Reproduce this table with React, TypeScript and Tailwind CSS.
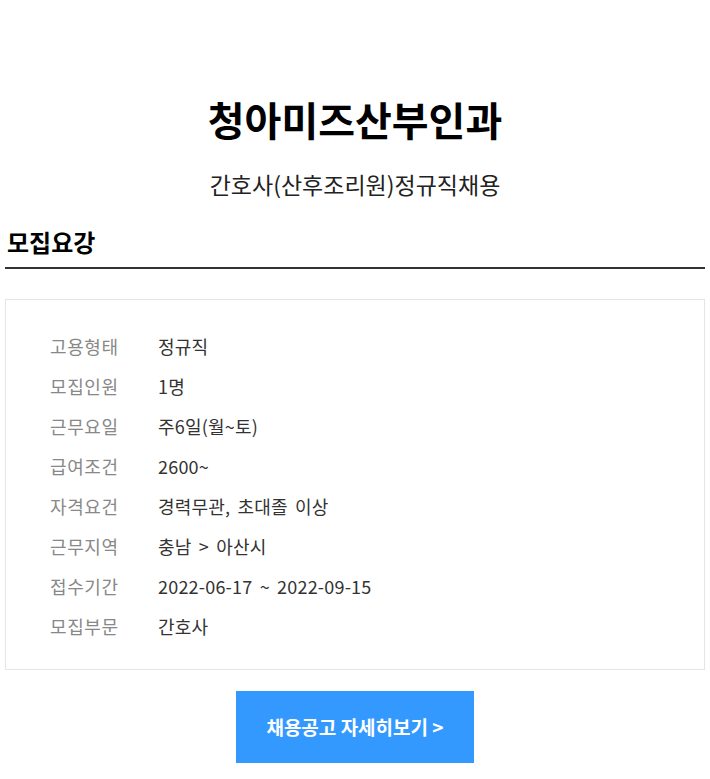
import React from "react";

const rows: [string, string][] = [
  ["고용형태", "정규직"],
  ["모집인원", "1명"],
  ["근무요일", "주6일(월~토)"],
  ["급여조건", "2600~"],
  ["자격요건", "경력무관, 초대졸 이상"],
  ["근무지역", "충남 > 아산시"],
  ["접수기간", "2022-06-17 ~ 2022-09-15"],
  ["모집부문", "간호사"],
];

export default function App() {
  return (
    <div
      className="w-[710px] bg-white px-[5px] text-[#222]"
      style={{ fontFamily: '"Noto Sans CJK KR", "Noto Sans", sans-serif' }}
    >
      <h1 className="pt-[92px] text-center text-[40px] font-bold leading-[54px] text-black">
        청아미즈산부인과
      </h1>
      <p className="mt-[23px] text-center text-[23px] leading-[30px] text-[#222]">
        간호사(산후조리원)정규직채용
      </p>
      <h2 className="mt-[27px] pl-[2px] text-[24px] font-bold leading-[32px] text-black">
        모집요강
      </h2>
      <div className="mt-[9px] h-[2px] bg-[#333]" />
      <div className="mt-[30px] border border-[#e5e5e5] pb-[23px] pt-[26px]">
        {rows.map(([k, v]) => (
          <div key={k} className="flex h-[40px] items-center text-[18px]">
            <div className="w-[152px] pl-[44px] tracking-[0.6px] text-[#888]">{k}</div>
            <div className="tracking-[0.2px] text-[#333] [word-spacing:3px]">{v}</div>
          </div>
        ))}
      </div>
      <div className="flex justify-center pb-[16px] pt-[21px]">
        <button className="h-[72px] w-[238px] bg-[#3399ff] text-[19px] font-bold text-white">
          채용공고 자세히보기 &gt;
        </button>
      </div>
    </div>
  );
}
